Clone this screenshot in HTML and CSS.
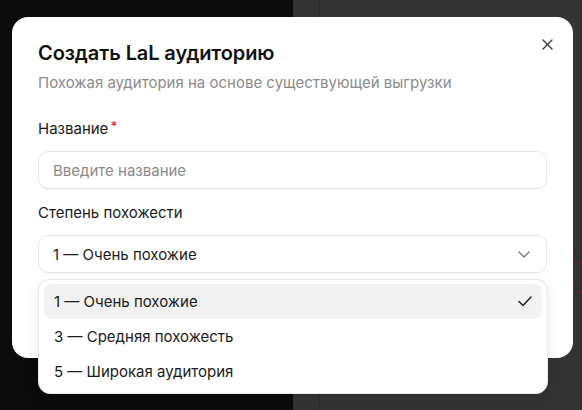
FILE: index.html
```html
<!DOCTYPE html>
<html lang="ru">
<head>
<meta charset="utf-8">
<title>Создать LaL аудиторию</title>
<link rel="stylesheet" href="styles.css">
</head>
<body>
<div class="backdrop">
  <div class="pane-dark"></div>
  <div class="pane-grey">
    <div class="pane-rail"></div>
    <div class="pane-content">
      <div class="code-line">audience_l_</div>
      <div class="code-line">lookalike_id_</div>
    </div>
  </div>
</div>

<div class="modal" role="dialog" aria-labelledby="modal-title">
  <button class="close" aria-label="Закрыть">
    <svg width="11" height="11" viewBox="0 0 11 11"><path d="M1 1l9 9M10 1l-9 9" stroke="currentColor" stroke-width="1.4" stroke-linecap="round"/></svg>
  </button>
  <h2 class="title" id="modal-title">Создать LaL аудиторию</h2>
  <p class="subtitle">Похожая аудитория на основе существующей выгрузки</p>

  <div class="field">
    <label class="label">Название<span class="req">*</span></label>
    <div class="control placeholder">Введите название</div>
  </div>

  <div class="field">
    <label class="label">Степень похожести</label>
    <div class="select-wrap">
      <div class="control select">
        <span>1 — Очень похожие</span>
        <svg class="chevron" width="12" height="7" viewBox="0 0 12 7"><path d="M1 1l5 5 5-5" fill="none" stroke="currentColor" stroke-width="1.4" stroke-linecap="round" stroke-linejoin="round"/></svg>
      </div>
      <ul class="menu">
        <li class="option active">
          <span>1 — Очень похожие</span>
          <svg width="14" height="11" viewBox="0 0 14 11"><path d="M1 5.5l4 4L13 1" fill="none" stroke="currentColor" stroke-width="1.5" stroke-linecap="round" stroke-linejoin="round"/></svg>
        </li>
        <li class="option"><span>3 — Средняя похожесть</span></li>
        <li class="option"><span>5 — Широкая аудитория</span></li>
      </ul>
    </div>
  </div>
</div>
</body>
</html>
```

FILE: styles.css
```css
* { box-sizing: border-box; }

html, body {
  margin: 0;
  width: 582px;
  height: 410px;
  overflow: hidden;
  font-family: Inter, "Noto Sans", "Liberation Sans", sans-serif;
}

/* page behind the dialog */
.backdrop {
  display: grid;
  grid-template-columns: 293px 1fr;
  height: 410px;
}
.pane-dark { background: #0b0b0b; }
.pane-grey {
  background: #333333;
  display: flex;
}
.pane-rail {
  width: 27px;
  border-right: 1px solid #2b2b2b;
}
.pane-content {
  flex: 1;
  padding: 249px 1px 0 0;
  display: flex;
  flex-direction: column;
  align-items: flex-end;
  gap: 14px;
}
.code-line {
  font-size: 13px;
  line-height: 16px;
  color: #6a2a18;
  white-space: nowrap;
}

/* dialog */
.modal {
  position: absolute;
  left: 12px;
  top: 17px;
  width: 561px;
  height: 341px;
  background: #fff;
  border-radius: 16px;
  padding: 22px 26px 0;
}

.close {
  position: absolute;
  top: 21px;
  right: 20px;
  width: 12px;
  height: 12px;
  padding: 0;
  border: 0;
  background: none;
  color: #3c3c3c;
  display: flex;
  align-items: center;
  justify-content: center;
}

.title {
  margin: 0;
  font-size: 20px;
  line-height: 28px;
  font-weight: 600;
  color: #111;
  letter-spacing: -0.1px;
}

.subtitle {
  margin: 6px 0 0;
  font-size: 15px;
  line-height: 20px;
  color: #8b8b8b;
}

.field {
  margin-top: 23px;
  display: flex;
  flex-direction: column;
  gap: 12px;
}
.field + .field { margin-top: 14px; }

.label {
  font-size: 15px;
  line-height: 20px;
  color: #1a1a1a;
}
.req {
  color: #e5302a;
  margin-left: 2px;
  font-size: 13px;
  font-weight: 600;
  vertical-align: 3px;
}

.control {
  height: 38px;
  border: 1px solid #e6e6e6;
  border-radius: 10px;
  padding: 0 14px;
  display: flex;
  align-items: center;
  font-size: 15px;
  color: #1a1a1a;
  box-shadow: 0 1px 2px rgba(0, 0, 0, 0.04);
}
.placeholder { color: #8a8a8a; }

.select { justify-content: space-between; }
.chevron { color: #7a7a7a; margin-right: 2px; }

.select-wrap { position: relative; }

.menu {
  position: absolute;
  left: 0;
  top: 44px;
  width: 510px;
  margin: 0;
  padding: 4px 5px;
  list-style: none;
  background: #fff;
  border: 1px solid #e8e8e8;
  border-radius: 12px;
  box-shadow: 0 4px 14px rgba(0, 0, 0, 0.08);
}

.option {
  height: 35px;
  padding: 0 10px;
  border-radius: 8px;
  display: flex;
  align-items: center;
  justify-content: space-between;
  font-size: 15px;
  color: #1a1a1a;
}
.option.active { background: #f2f2f2; }
.option svg { color: #222; }
```
